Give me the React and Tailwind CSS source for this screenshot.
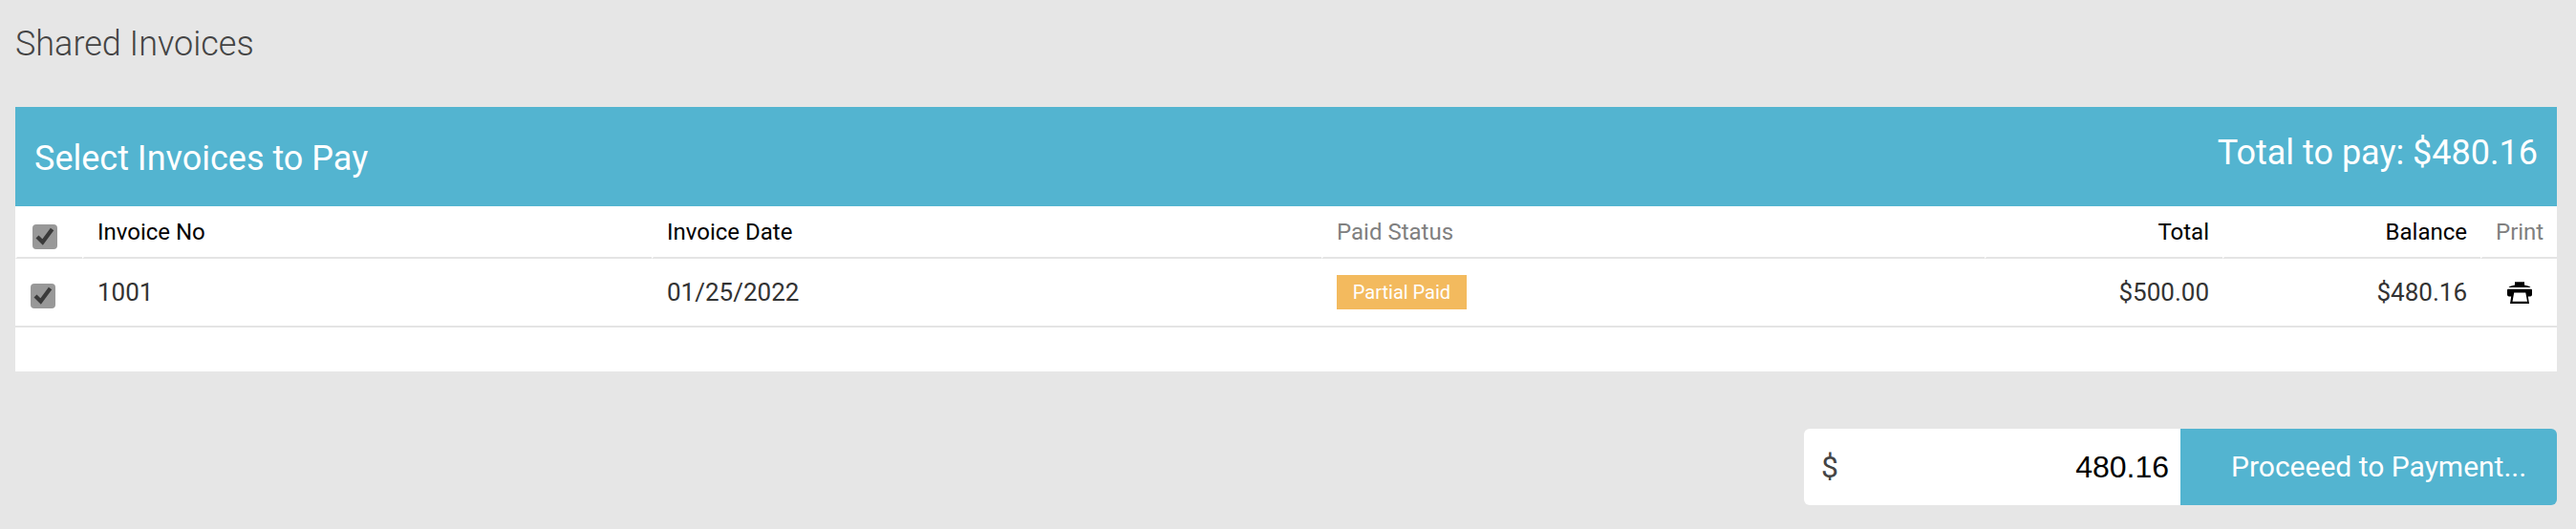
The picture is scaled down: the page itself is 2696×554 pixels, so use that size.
import { useState } from 'react'

const invoices = [
  { no: '1001', date: '01/25/2022', status: 'Partial Paid', total: '$500.00', balance: '$480.16' },
]

const th = 'border-l-2 border-b-2 border-l-white border-b-[#e4e4e4] pt-[13px] pl-[14px] text-left align-top text-[24px] leading-[28px] font-normal'
const thRight = 'border-l-2 border-b-2 border-l-white border-b-[#e4e4e4] pt-[13px] pr-[14px] text-right align-top text-[24px] leading-[28px] font-normal'
const td = 'border-b-2 border-[#e4e4e4] pt-[20px] pl-[16px] align-top text-[26px] leading-[30px]'

function Checkbox({ checked, onChange }) {
  return (
    <button
      role="checkbox"
      aria-checked={checked}
      onClick={onChange}
      className="block size-[26px] rounded-[4px] bg-[#989898]"
    >
      {checked && (
        <svg viewBox="0 0 26 26" className="size-[26px]" fill="none" stroke="#3a3a3a" strokeWidth="4.2">
          <path d="M5 13 L10.600 18.600 L20.600 5" />
        </svg>
      )}
    </button>
  )
}

function PrintIcon() {
  return (
    <svg viewBox="0 0 26 24" className="h-[24px] w-[26px]" fill="#000">
      <path d="M8 1.300h10v3.200c3 .4 5 1.200 6.500 2.500h-23C3 5.700 5 4.900 8 4.500z" />
      <path fillRule="evenodd" d="M1 8.800h24a1 1 0 0 1 1 1v4.700a2 2 0 0 1-2 2h-2.200l1.200 7.500H3l1.200-7.500H2a2 2 0 0 1-2-2V9.800a1 1 0 0 1 1-1zM7.200 12.500L5.500 21.700h15.500L19.300 12.500z" />
    </svg>
  )
}

export default function App() {
  const [checked, setChecked] = useState(true)
  const [amount, setAmount] = useState('480.16')
  const toggle = () => setChecked(!checked)

  return (
    <div className="h-[554px] w-full overflow-hidden bg-[#e6e6e6] pr-[20px] pl-[16px] font-[Roboto,sans-serif] text-[#333]">
      <h1 className="h-[112px] pt-[25px] text-[36px] leading-[42px] font-light text-[#444]">Shared Invoices</h1>

      {/* Invoice panel */}
      <section className="h-[277px] bg-white">
        <header className="flex h-[104px] items-start justify-between bg-[#53b4d0] px-[20px] text-[36px] leading-[42px] text-white">
          <h2 className="pt-[33px]">Select Invoices to Pay</h2>
          <div className="pt-[27px]">Total to pay: $480.16</div>
        </header>

        <table className="w-full table-fixed border-separate border-spacing-0">
          <colgroup>
            <col className="w-[70px]" />
            <col className="w-[596px]" />
            <col className="w-[701px]" />
            <col className="w-[694px]" />
            <col className="w-[249px]" />
            <col className="w-[270px]" />
            <col className="w-[80px]" />
          </colgroup>
          <thead>
            <tr className="h-[55px] text-black">
              <th className="border-b-2 border-l-2 border-b-[#e4e4e4] border-l-white pt-[19px] pl-[16px] align-top">
                <Checkbox checked={checked} onChange={toggle} />
              </th>
              <th className={th}>Invoice No</th>
              <th className={th}>Invoice Date</th>
              <th className={`${th} text-[#808080]`}>Paid Status</th>
              <th className={thRight}>Total</th>
              <th className={thRight}>Balance</th>
              <th className={`${th} text-[#808080]`}>Print</th>
            </tr>
          </thead>
          <tbody>
            {invoices.map((inv) => (
              <tr key={inv.no} className="h-[72px]">
                <td className="border-b-2 border-[#e4e4e4] pt-[26px] pl-[16px] align-top">
                  <Checkbox checked={checked} onChange={toggle} />
                </td>
                <td className={td}>{inv.no}</td>
                <td className={td}>{inv.date}</td>
                <td className="border-b-2 border-[#e4e4e4] pt-[17px] pl-[16px] align-top">
                  <span className="flex h-[36px] w-[136px] items-center justify-center bg-[#f3ba5e] text-[20px] text-white">
                    {inv.status}
                  </span>
                </td>
                <td className={`${td} pr-[14px] text-right`}>{inv.total}</td>
                <td className={`${td} pr-[14px] text-right`}>{inv.balance}</td>
                <td className="border-b-2 border-[#e4e4e4] pt-[23px] pl-[28px] align-top">
                  <PrintIcon />
                </td>
              </tr>
            ))}
          </tbody>
        </table>
      </section>

      {/* Payment */}
      <div className="mt-[60px] flex h-[80px] justify-end">
        <label className="flex w-[394px] items-center rounded-l-[6px] bg-white pr-[12px] pb-[1px] pl-[18px]">
          <span className="text-[32px] text-[#444]">$</span>
          <input
            value={amount}
            onChange={(e) => setAmount(e.target.value)}
            className="min-w-0 flex-1 text-right font-['Liberation_Sans',sans-serif] text-[32px] text-black outline-none"
          />
        </label>
        <button className="w-[394px] rounded-r-[6px] bg-[#53b4d0] pb-[2px] pl-[53px] text-left text-[30px] text-white">
          Proceeed to Payment...
        </button>
      </div>
    </div>
  )
}
